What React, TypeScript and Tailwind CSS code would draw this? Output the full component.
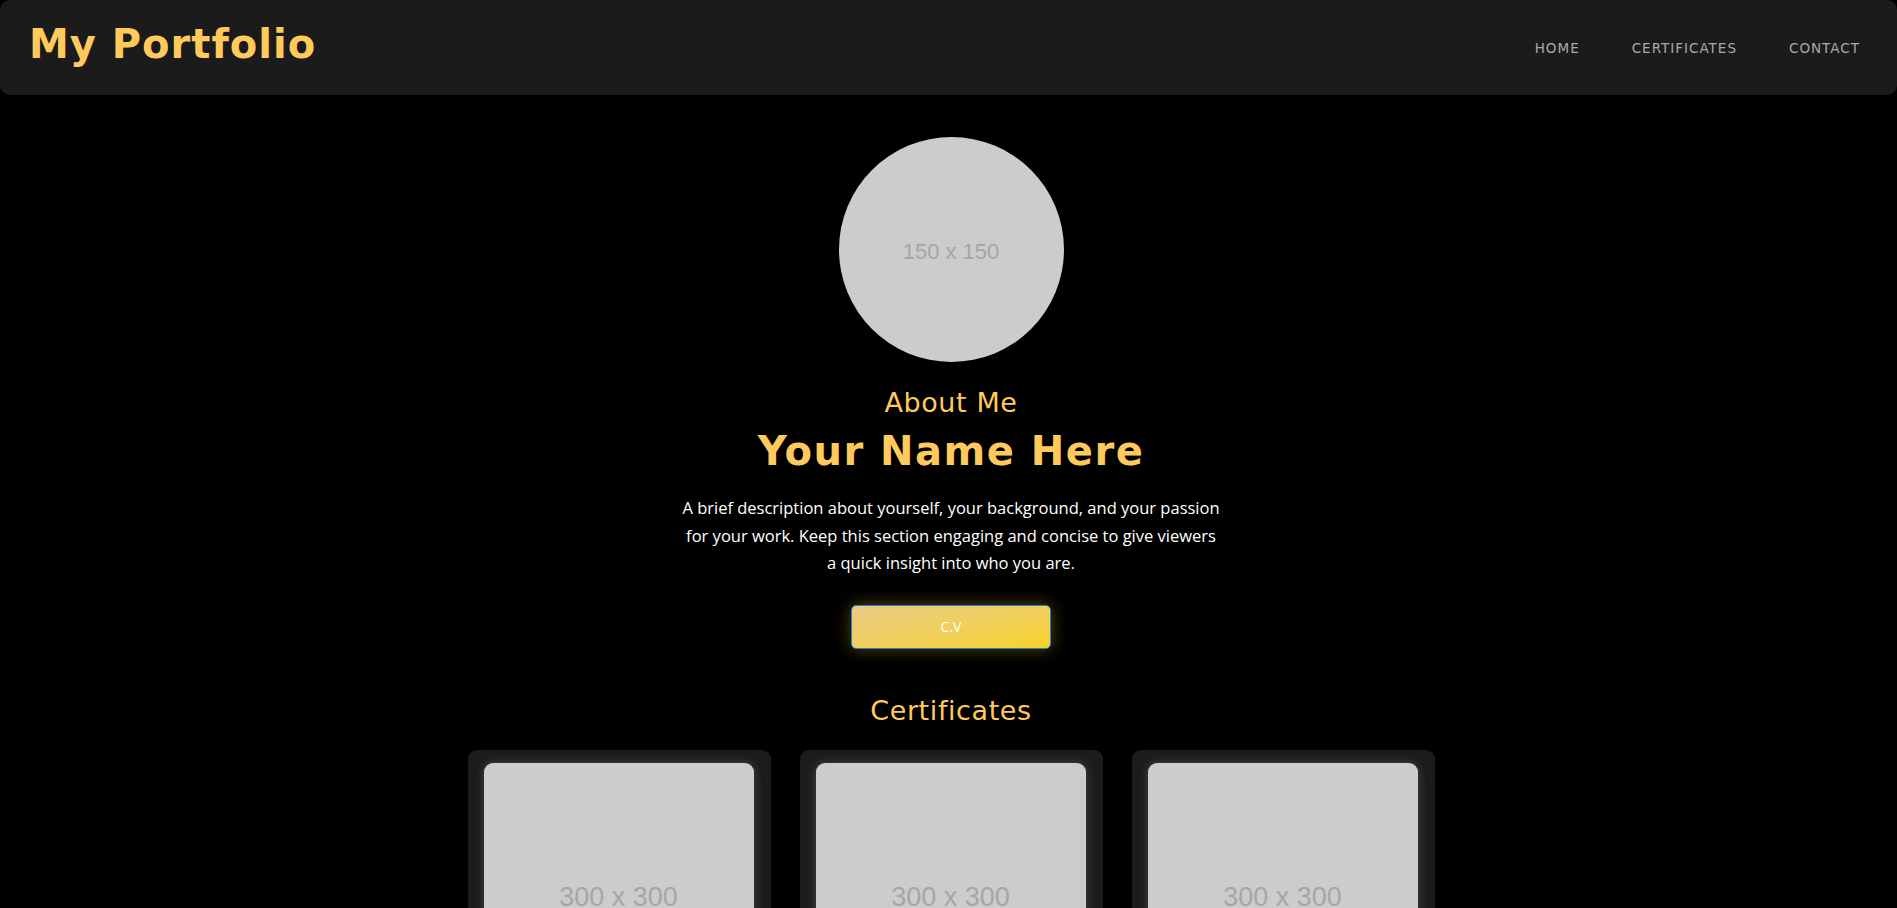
import React from "react";

const heading = { fontFamily: '"DejaVu Sans", "Noto Sans", sans-serif' };
const body = { fontFamily: '"Open Sans", "Noto Sans", sans-serif' };

function Placeholder({ label, className, textClass }: { label: string; className: string; textClass: string }) {
  return (
    <div className={`flex items-center justify-center bg-[#cccccc] ${className}`}>
      <span className={`text-[#a6a6a6] ${textClass}`} style={{ fontFamily: '"Liberation Sans", Arial, sans-serif' }}>
        {label}
      </span>
    </div>
  );
}

export default function App() {
  return (
    <div className="min-h-screen bg-black" style={body}>
      <header className="flex h-[95px] items-start justify-between rounded-[10px] bg-[#1b1b1b] pl-[29px] pr-[37px]">
        <h1 className="mt-[14px] text-[40px] font-semibold tracking-[1px] text-[#ffc95c]" style={heading}>
          My Portfolio
        </h1>
        <nav className="mt-[38px] flex gap-[52px] text-[13.5px] uppercase tracking-[1px] text-[#aaaaaa]" style={heading}>
          <a>Home</a>
          <a>Certificates</a>
          <a>Contact</a>
        </nav>
      </header>

      <main className="flex flex-col items-center pl-[5px]">
        <Placeholder label="150 x 150" className="mt-[42px] h-[225px] w-[225px] rounded-full" textClass="mt-[4px] text-[22px]" />

        <h2 className="mt-[23px] text-[27px] leading-[36px] tracking-[0.6px] text-[#ffc95c]" style={heading}>
          About Me
        </h2>
        <h3 className="mt-[3px] text-[40px] font-semibold leading-[54px] tracking-[1.5px] text-[#ffc95c]" style={heading}>
          Your Name Here
        </h3>
        <p className="mt-[16px] w-[600px] text-center text-[16.5px] leading-[27.5px] text-white">
          A brief description about yourself, your background, and your passion
          <br />
          for your work. Keep this section engaging and concise to give viewers
          <br />
          a quick insight into who you are.
        </p>

        <button className="mt-[28px] h-[44px] w-[200px] rounded-[5px] border border-[#1e7fe0] bg-gradient-to-br from-[#e9cb82] to-[#f7d31a] text-[14px] text-white shadow-[0_0_16px_rgba(255,210,0,0.35)]">
          C.V
        </button>

        <h2 className="mt-[44px] text-[27px] leading-[36px] tracking-[0.6px] text-[#ffc95c]" style={heading}>
          Certificates
        </h2>

        <div className="mt-[21px] flex gap-[29px]">
          {[0, 1, 2].map((i) => (
            <div key={i} className="rounded-[9px] bg-[#1c1c1c] pb-[13px] pl-[16px] pr-[17px] pt-[13px]">
              <Placeholder
                label="300 x 300"
                className="h-[270px] w-[270px] rounded-[9px] shadow-[0_0_10px_rgba(90,90,90,0.7)]"
                textClass="text-[27px]"
              />
            </div>
          ))}
        </div>
      </main>
    </div>
  );
}
